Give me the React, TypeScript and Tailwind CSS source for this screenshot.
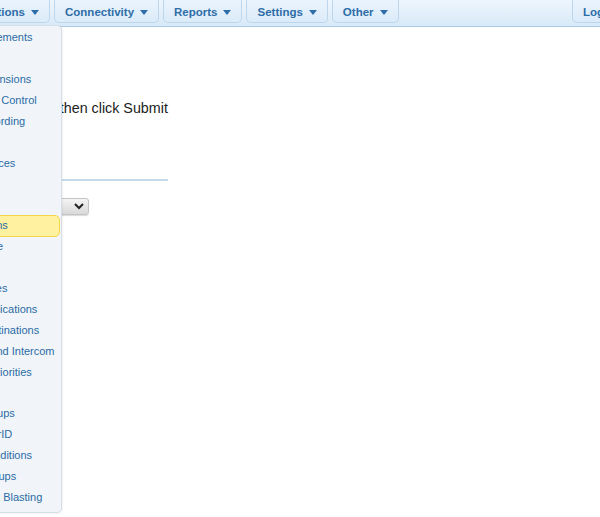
import React from 'react';

const topMenus = ['Applications', 'Connectivity', 'Reports', 'Settings', 'Other'];

const appItems = [
  'Announcements',
  'Blacklist',
  'Bulk Extensions',
  'Call Flow Control',
  'Call Recording',
  'Callback',
  'Conferences',
  'DISA',
  'Directory',
  'Extensions',
  'Follow Me',
  'IVR',
  'Languages',
  'Misc Applications',
  'Misc Destinations',
  'Paging and Intercom',
  'Queue Priorities',
  'Queues',
  'Ring Groups',
  'Set CallerID',
  'Time Conditions',
  'Time Groups',
  'Voicemail Blasting',
];

const Caret: React.FC = () => (
  <svg width="8" height="5" viewBox="0 0 8 5" className="shrink-0">
    <path d="M0 0h8L4 5z" fill="#2d6da8" />
  </svg>
);

const NavButton: React.FC<{ label: string; caret?: boolean; className?: string }> = ({ label, caret = true, className = '' }) => (
  <div
    className={`flex items-center gap-[6px] h-[24px] -mt-[1px] pt-[4px] px-[10px] shrink-0 rounded-b-[5px] border border-t-0 border-[#bcd6ee] bg-gradient-to-b from-[#eaf4fd] to-[#dcebf9] text-[11.5px] font-bold text-[#2d6da8] ${className}`}
  >
    <span>{label}</span>
    {caret && <Caret />}
  </div>
);

export default function App() {
  return (
    <div className="w-[600px] h-[517px] overflow-hidden bg-white" style={{ fontFamily: '"Liberation Sans", Arial, sans-serif' }}>
      {/* page is scrolled sideways, so everything sits left of the window */}
      <div className="relative w-[810px] -ml-[170px]">
        <div className="flex items-start gap-[4px] h-[27px] pl-[115px] pr-[7px] border-b border-[#a9cce9] bg-gradient-to-b from-[#eef6fd] to-[#d8e9f7]">
          {topMenus.map((m) => (
            <NavButton key={m} label={m} />
          ))}
          <NavButton label="Logout" caret={false} className="ml-auto" />
        </div>

        <div className="pl-[20px] pt-[23px] w-fit">
          <h2 className="text-[16px] leading-[20px] font-bold text-[#222]">Add Extension</h2>
          <p className="mt-[30px] text-[14.3px] leading-[16px] text-[#222] whitespace-nowrap">
            Please select your Device below then click Submit
          </p>
          <div className="mt-[63px] border-t-2 border-[#c6d9eb]" />
          <div className="flex items-center mt-[16px] text-[12px] text-[#222]">
            <span className="w-[99px]">Device</span>
            <div className="relative w-[140px] h-[17px]">
              <select className="w-full h-full appearance-none rounded-[3px] border border-[#c4c4c4] bg-gradient-to-b from-[#f4f4f4] to-[#d9d9d9] pl-[4px] text-[12px] text-[#222] shadow-[0_1px_1px_rgba(0,0,0,0.15)]">
                <option>Generic SIP Device</option>
              </select>
              <svg width="10" height="7" viewBox="0 0 10 7" className="absolute right-[5px] top-[5px] pointer-events-none">
                <path d="M1 1l4 4 4-4" fill="none" stroke="#222" strokeWidth="2" />
              </svg>
            </div>
          </div>
        </div>

        {/* Applications dropdown */}
        <div className="absolute left-[115px] top-[25px] w-[117px] pt-[1px] pb-[4px] rounded-r-[5px] border border-[#d5dde5] bg-[#f1f5f9] shadow-[1px_1px_2px_rgba(0,0,0,0.05)]">
          {appItems.map((it) => (
            <div
              key={it}
              className={`h-[20.9px] mr-[1px] flex items-center pl-[7px] whitespace-nowrap text-[11px] text-[#2b6ba5] ${
                it === 'Extensions' ? 'rounded-[5px] border border-[#f2d64a] bg-[#fff1a0] -my-[0.5px] h-[22px]' : ''
              }`}
            >
              {it}
            </div>
          ))}
        </div>
      </div>
    </div>
  );
}
